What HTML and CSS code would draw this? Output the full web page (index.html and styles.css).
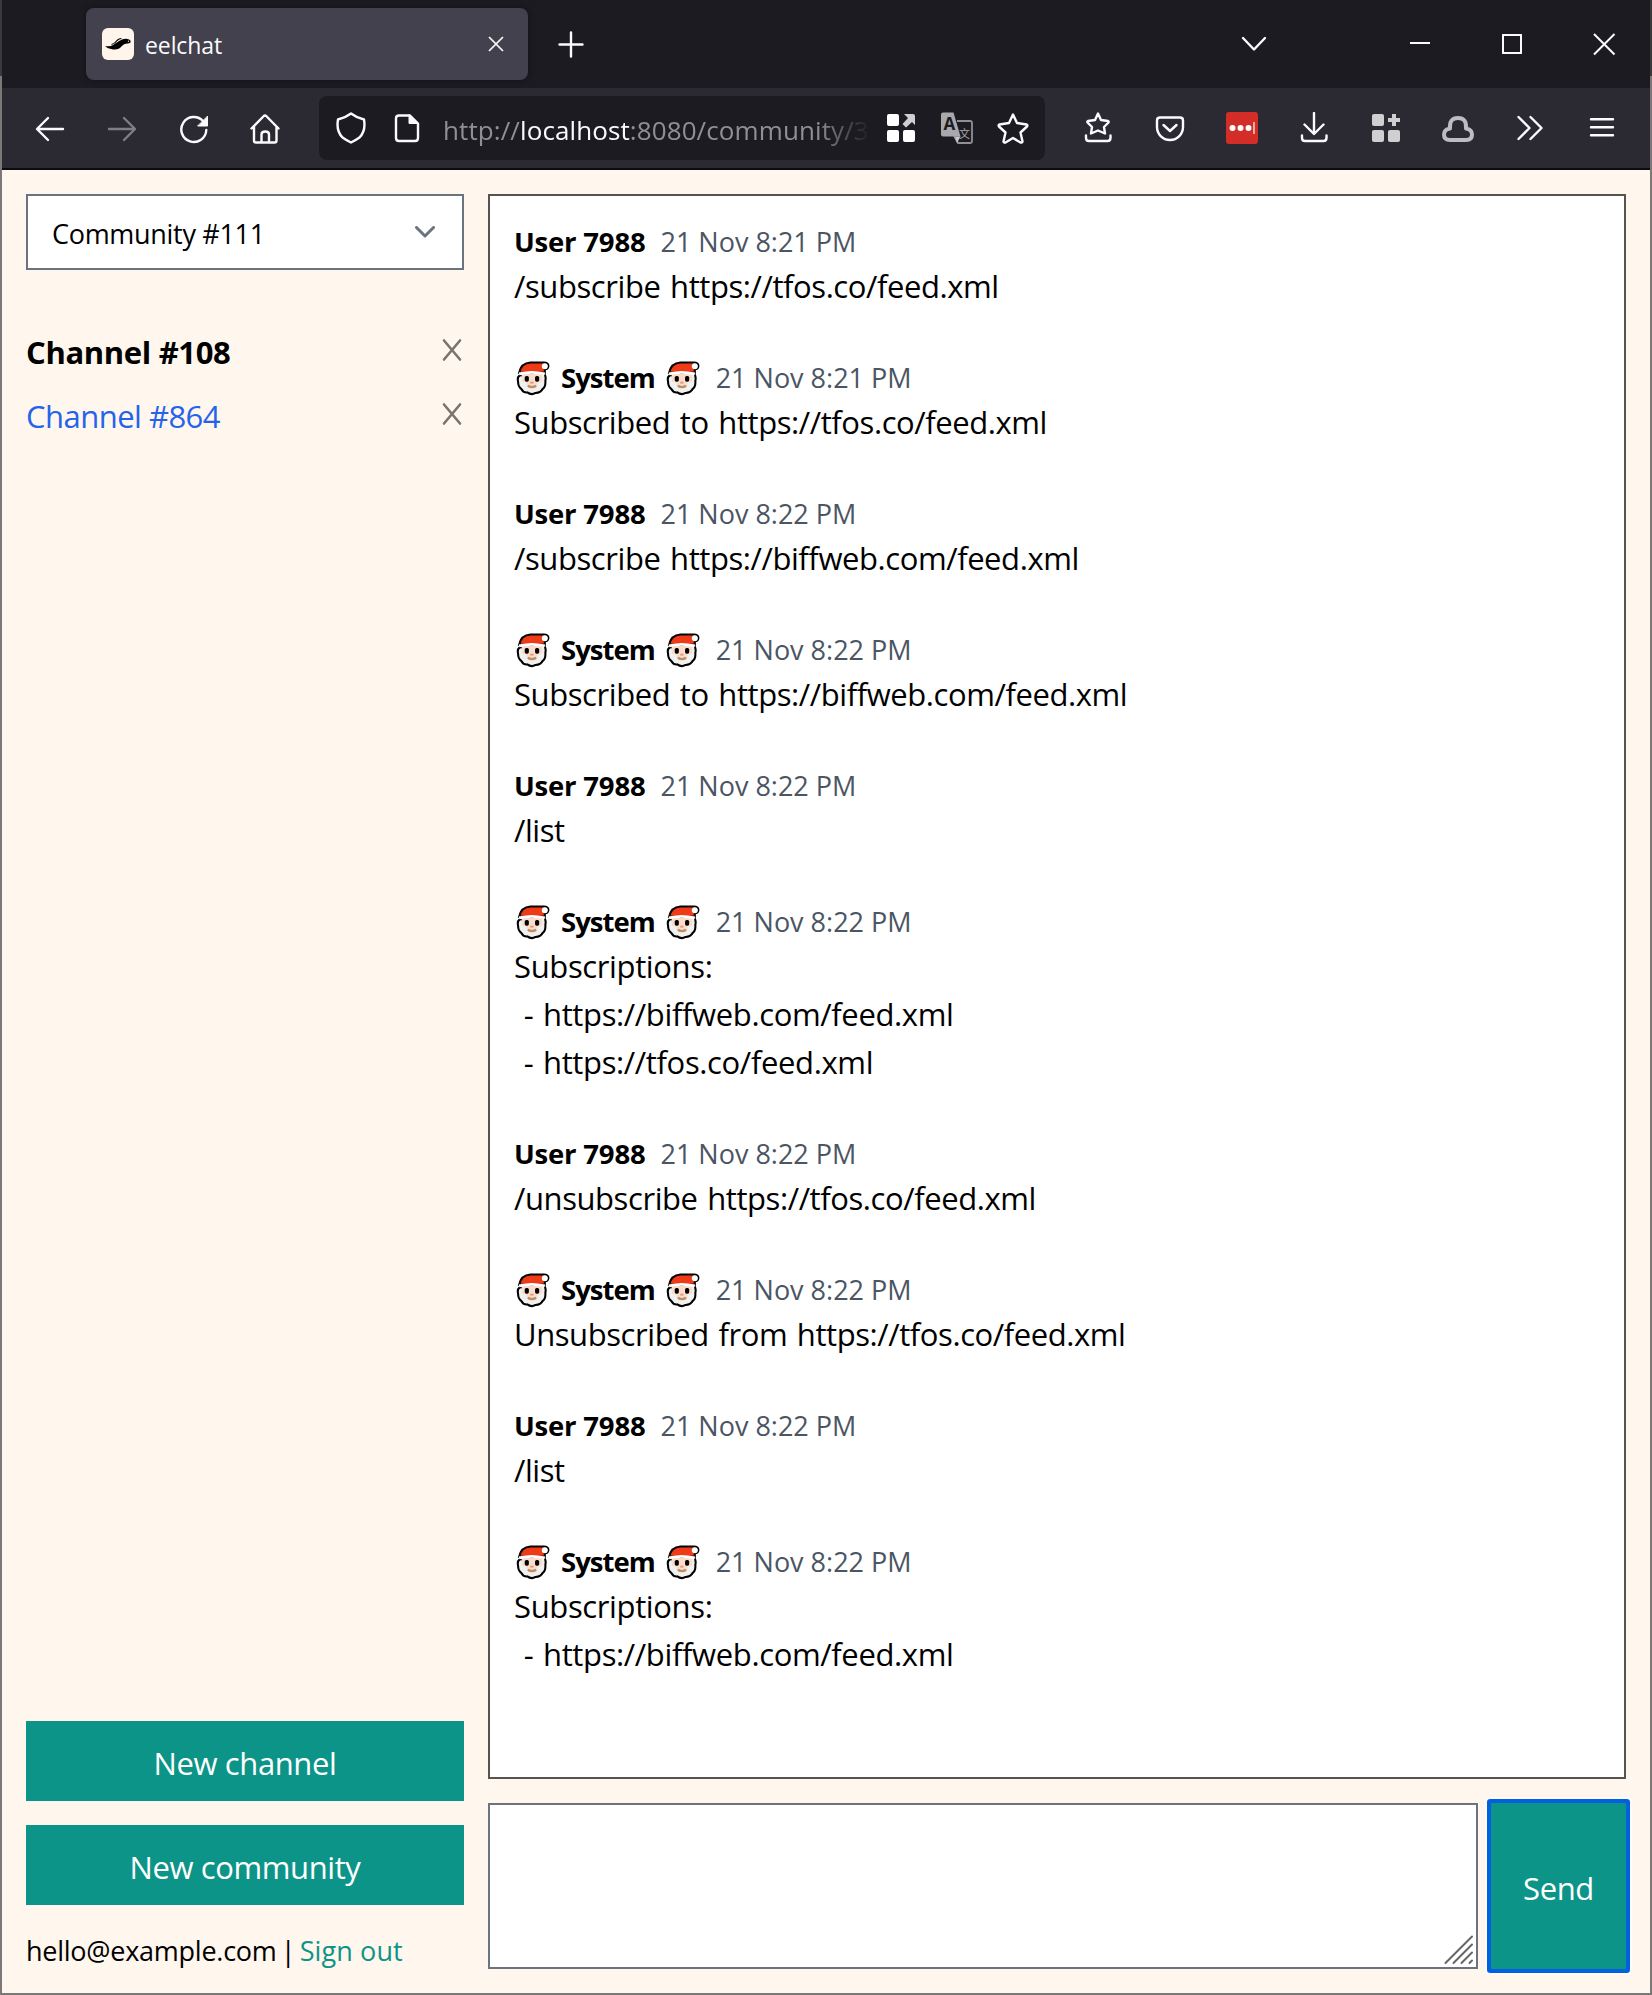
FILE: index.html
```html
<!DOCTYPE html>
<html lang="en">
<head>
<meta charset="utf-8">
<title>eelchat</title>
<link rel="stylesheet" href="styles.css">
</head>
<body>
<svg class="defs" width="0" height="0" aria-hidden="true">
  <symbol id="santa" viewBox="0 0 34 34">
    <path d="M3.500 14 Q1 16 2 20 Q2 25 5 27 Q7 31 11 30.500 Q15 33.500 19 31 Q24 31 26 27 Q29 25 28.500 19 Q29.500 16 27.500 12 Z" fill="#f1f1f1" stroke="#000" stroke-width="2"/>
    <path d="M5.500 12 H25.500 V18 Q25.500 21 22 20.500 Q15.500 18.500 9 20.500 Q5.500 21 5.500 18 Z" fill="#fbdccb"/>
    <rect x="10" y="18" width="11" height="8" rx="4" fill="#fbdccb"/>
    <path d="M3 11.500 Q5 2 14 1.500 H27 Q31.500 1.500 31.500 5 Q31 8.300 28 8 V11.500 Z" fill="#f03a17" stroke="#000" stroke-width="2"/>
    <path d="M3 12.500 Q15 9.500 28 12.500" fill="none" stroke="#fff" stroke-width="2.600"/>
    <circle cx="28" cy="5" r="2.900" fill="#fff"/>
    <rect x="8.500" y="14.500" width="4" height="5.600" rx="1.600"/><rect x="18.500" y="14.500" width="4" height="5.600" rx="1.600"/>
    <path d="M13.800 21 H17" stroke="#d59f73" stroke-width="1.800"/>
    <path d="M11.500 24 Q15.500 26.600 19.500 24" fill="none" stroke="#bf8f62" stroke-width="2.200"/>
  </symbol>
  <symbol id="cross" viewBox="0 0 20 24"><path d="M2 2.500 L18 21.500 M18 2.500 L2 21.500"/></symbol>
</svg>

<div class="window">
  <header class="browser">
    <div class="tabs">
      <div class="tab">
        <svg class="favicon" viewBox="0 0 32 32"><rect width="32" height="32" rx="6" fill="#fff5eb"/><path d="M3 18 Q8 19 11 17 Q15 14 18 12.500 Q23 9.500 28 12 Q30 15 26 15.500 Q22 15 20 18 Q16 23 9 21 Q5 20.500 3 18Z"/><path d="M9.500 16.500 Q13 15.500 15 12.500 Q17 10.500 19.500 10.500" fill="none" stroke="#000" stroke-width="1.200"/><circle cx="26.500" cy="13.200" r=".7" fill="#ddd"/></svg>
        <span class="tab-title">eelchat</span>
        <svg class="tab-close" viewBox="0 0 16 16"><path d="M1 1 L15 15 M15 1 L1 15"/></svg>
      </div>
      <svg class="ico new-tab" viewBox="0 0 32 32"><path d="M16 4.500 V28.500 M4.500 16.500 H27.500"/></svg>
      <svg class="ico list-tabs" viewBox="0 0 32 32"><path d="M5 10 L16 21.500 L27 10"/></svg>
      <div class="window-buttons">
        <span><svg class="ico thin" viewBox="0 0 32 32"><path d="M6 15 H26"/></svg></span>
        <span><svg class="ico thin" viewBox="0 0 32 32"><rect x="7" y="7" width="18" height="18"/></svg></span>
        <span><svg class="ico thin" viewBox="0 0 32 32"><path d="M6 6 L26.500 26.500 M26.500 6 L6 26.500"/></svg></span>
      </div>
    </div>
    <div class="toolbar">
      <div class="buttons">
        <span><svg class="ico" viewBox="0 0 32 32"><path d="M29 17 H3.500 M14 6 L3 17 L14 28"/></svg></span>
        <span class="disabled"><svg class="ico" viewBox="0 0 32 32"><path d="M3 17 H28.500 M18 6 L29 17 L18 28"/></svg></span>
        <span><svg class="ico" viewBox="0 0 32 32"><path d="M28.300 18 A12.500 12.500 0 1 1 25 9"/><path class="solid" d="M29.500 4.500 V14 H20 Z"/></svg></span>
        <span><svg class="ico" viewBox="1 0 32 32"><path d="M2.500 16.500 L14.800 4 Q16 3 17.200 4 L29.500 16.500 M5 14.500 V28.500 Q5 30.500 7 30.500 H25.500 Q27.500 30.500 27.500 28.500 V14.500 M12.500 30 V22.500 Q12.500 19.500 16.300 19.500 Q20 19.500 20 22.500 V30"/></svg></span>
      </div>
      <div class="urlbar">
        <span class="slot"><svg class="ico" viewBox="0 0 32 32"><path d="M16 1.500 Q22 6 29 7.500 Q31 19 24.500 25.500 Q21 28 16 30.500 Q11 28 7.500 25.500 Q1 19 3 7.500 Q10 6 16 1.500Z"/></svg></span>
        <span class="slot"><svg class="ico" viewBox="0 0 32 32"><path d="M19 3.500 H8 Q5 3.500 5 6.500 V26 Q5 29 8 29 H24 Q27 29 27 26 V11.500 Z"/><path class="solid" d="M18 3 V11.500 H27 Z"/></svg></span>
        <span class="url">http://<b>localhost</b>:8080/community/3</span>
        <span class="slot"><svg class="ico fills" viewBox="0 0 32 32"><rect x="2" y="2" width="12" height="12" rx="2"/><rect x="2" y="18" width="12" height="12" rx="2"/><rect x="18" y="18" width="12" height="12" rx="2"/><path d="M19 2 H28 Q30 2 30 4 V13 L27 10 L21 15.500 L17.500 12 L23 6 Z" fill="#cfcfd1"/></svg></span>
        <span class="slot"><svg class="translate" viewBox="0 0 32 32"><path d="M16 9 H29 Q31 9 31 11 V29 Q31 31 29 31 H17 L13 24" fill="none" stroke="#8f8f94" stroke-width="1.800"/><path d="M2 .5 H12.500 L19.500 24.500 H2 Q0 24.500 0 22.500 V2.500 Q0 .5 2 .5Z" fill="#a9a9ac"/><path d="M14 24.500 H19.500 L16 31Z" fill="#c8c8ca"/><text x="2.500" y="18" class="tr-a">A</text><text x="18" y="25.500" class="tr-b">文</text></svg></span>
        <span class="slot"><svg class="ico" viewBox="0 0 32 32"><path d="M16 2.500 L20 11 L29.500 12.500 Q31 13 30 14.500 L23.500 20.500 L25.500 29.500 Q25 31 23.500 30.500 L16 26 L8.500 30.500 Q7 31 6.500 29.500 L8.500 20.500 L2 14.500 Q1 13 2.500 12.500 L12 11 Z"/></svg></span>
      </div>
      <div class="buttons">
        <span><svg class="ico" viewBox="0 0 32 32"><path d="M16 1.500 L19 8 L26 9 Q27 9.500 26.500 10.500 L22 15 L23 21.500 L16 18.500 L9 21.500 L10 15 L5.500 10.500 Q5 9.500 6 9 L13 8 Z M4 23.500 V26 Q4 29 7 29 H25.500 Q28.500 29 28.500 26 V23.500"/></svg></span>
        <span><svg class="ico" viewBox="0 0 32 32"><path d="M6 5.500 H26 Q29 5.500 29 8.500 V15 C29 22 23.500 28 16 28 S3 22 3 15 V8.500 Q3 5.500 6 5.500Z M9.500 13 L16 19 L22.500 13"/></svg></span>
        <span><svg class="ico fills" viewBox="0 0 32 32"><rect width="32" height="32" rx="3" fill="#d32d27"/><circle cx="6.500" cy="16" r="3"/><circle cx="14.500" cy="16" r="3"/><circle cx="22.500" cy="16" r="3"/><rect x="27" y="10" width="2" height="12" fill="#eaa"/></svg></span>
        <span><svg class="ico" viewBox="0 0 32 32"><path d="M16 1 V21.500 M6.500 12.500 L16 22 L25.500 12.500 M4 23.500 V26 Q4 29 7 29 H25.500 Q28.500 29 28.500 26 V23.500"/></svg></span>
        <span><svg class="ico greys" viewBox="0 0 32 32"><rect x="2" y="2" width="12" height="12" rx="2"/><rect x="2" y="18" width="12" height="12" rx="2"/><rect x="18" y="18" width="12" height="12" rx="2"/><path d="M22 2 H26 V6 H30 V10 H26 V14 H22 V10 H18 V6 H22 Z"/></svg></span>
        <span><svg class="ico cloud" viewBox="0 0 32 32"><path d="M8 28 Q2 28 2 22.500 Q2 17.500 8 16.500 Q7 6 16 6 Q25 6 24 16.500 Q30 17.500 30 22.500 Q30 28 24 28 Z"/></svg></span>
        <span><svg class="ico" viewBox="0 0 32 32"><path d="M4.500 5 L15.500 16 L4.500 27 M16.500 5 L27.500 16 L16.500 27"/></svg></span>
        <span><svg class="ico" viewBox="0 0 32 32"><path d="M5 7.300 H27 M5 15.300 H27 M5 23.300 H27"/></svg></span>
      </div>
    </div>
  </header>

  <div class="app">
    <aside class="sidebar">
      <div class="select"><span>Community #111</span><svg viewBox="0 0 20 12"><path d="M1.500 1.500 L10 10 L18.500 1.500"/></svg></div>
      <nav class="channels">
        <div class="channel current"><span>Channel #108</span><svg><use href="#cross"/></svg></div>
        <div class="channel"><a>Channel #864</a><svg><use href="#cross"/></svg></div>
      </nav>
      <button class="btn">New channel</button>
      <button class="btn">New community</button>
      <div class="account"><span>hello@example.com</span> | <a>Sign out</a></div>
    </aside>
    <main class="chat">
      <section class="messages">
        <article><h3><b>User 7988</b><time>21 Nov 8:21 PM</time></h3><p>/subscribe https://tfos.co/feed.xml</p></article>
        <article class="system"><h3><svg><use href="#santa"/></svg><b>System</b><svg><use href="#santa"/></svg><time>21 Nov 8:21 PM</time></h3><p>Subscribed to https://tfos.co/feed.xml</p></article>
        <article><h3><b>User 7988</b><time>21 Nov 8:22 PM</time></h3><p>/subscribe https://biffweb.com/feed.xml</p></article>
        <article class="system"><h3><svg><use href="#santa"/></svg><b>System</b><svg><use href="#santa"/></svg><time>21 Nov 8:22 PM</time></h3><p>Subscribed to https://biffweb.com/feed.xml</p></article>
        <article><h3><b>User 7988</b><time>21 Nov 8:22 PM</time></h3><p>/list</p></article>
        <article class="system"><h3><svg><use href="#santa"/></svg><b>System</b><svg><use href="#santa"/></svg><time>21 Nov 8:22 PM</time></h3><p class="list">Subscriptions:
 - https://biffweb.com/feed.xml
 - https://tfos.co/feed.xml</p></article>
        <article><h3><b>User 7988</b><time>21 Nov 8:22 PM</time></h3><p>/unsubscribe https://tfos.co/feed.xml</p></article>
        <article class="system"><h3><svg><use href="#santa"/></svg><b>System</b><svg><use href="#santa"/></svg><time>21 Nov 8:22 PM</time></h3><p>Unsubscribed from https://tfos.co/feed.xml</p></article>
        <article><h3><b>User 7988</b><time>21 Nov 8:22 PM</time></h3><p>/list</p></article>
        <article class="system"><h3><svg><use href="#santa"/></svg><b>System</b><svg><use href="#santa"/></svg><time>21 Nov 8:22 PM</time></h3><p class="list">Subscriptions:
 - https://biffweb.com/feed.xml</p></article>
      </section>
      <form class="composer">
        <div class="field"><svg viewBox="0 0 30 30"><path d="M1.500 28 L28 1.500 M9.500 28 L28 9.500 M17.500 28 L28 17.500 M25.500 28 L28 25.500"/></svg></div>
        <button class="send" type="button">Send</button>
      </form>
    </main>
  </div>
</div>
</body>
</html>
```
FILE: styles.css
```css
* { box-sizing: border-box; }
body { margin: 0; font-family: "Open Sans", "Noto Sans", sans-serif; color: #000; }
h3, p { margin: 0; font-weight: 400; }
svg { display: block; flex: none; }
.defs { position: absolute; }

.window {
  height: 1995px; padding: 0 2px 2px;
  display: flex; flex-direction: column;
  background: linear-gradient(#3a3a3c 0, #3a3a3c 76px, #7b7877 76px);
}

/* Browser chrome */
.browser { height: 170px; border-bottom: 2px solid #0c0c0d; background: #2b2a33; }
.tabs { height: 88px; background: #1c1b22; display: flex; align-items: center; padding-left: 84px; }
.tab {
  width: 442px; height: 72px; padding: 0 24px 0 16px; border-radius: 8px;
  background: #42414d; box-shadow: 0 0 6px rgba(0, 0, 0, .4);
  display: flex; align-items: center;
}
.favicon { width: 32px; height: 32px; }
.tab-title { flex: 1; padding: 2px 0 0 11px; font-size: 23px; color: #fbfbfe; letter-spacing: -.1px; }
.tab-close { width: 16px; height: 16px; fill: none; stroke: #fbfbfe; stroke-width: 1.7; }
.ico { width: 32px; height: 32px; fill: none; stroke: #fbfbfe; stroke-width: 2.4; stroke-linecap: round; stroke-linejoin: round; }
.ico .solid { fill: #fbfbfe; stroke-width: 1; }
.ico.thin { stroke-width: 2; stroke-linecap: butt; stroke-linejoin: miter; }
.ico.fills { fill: #fff; stroke: none; }
.ico.greys { fill: #cfcfd1; stroke: none; }
.ico.cloud { stroke: #bdbdc1; stroke-width: 4; }
.new-tab { margin-left: 27px; }
.list-tabs { margin-left: auto; margin-right: 104px; }
.window-buttons { display: flex; }
.window-buttons span { width: 92px; display: flex; justify-content: center; }
.toolbar { height: 80px; display: flex; align-items: center; padding-left: 12px; }
.buttons { display: flex; }
.buttons span { width: 72px; display: flex; justify-content: center; }
.buttons .disabled { opacity: .4; }
.urlbar {
  width: 726px; height: 64px; margin: 0 17px; padding: 0 4px; border-radius: 8px;
  background: #1c1b22; display: flex; align-items: center;
}
.slot { flex: none; width: 56px; display: flex; justify-content: center; }
.url {
  flex: 1; min-width: 0; overflow: hidden; white-space: nowrap; margin: 0 2px 0 8px; padding-top: 3px;
  font-size: 26px; line-height: 40px; color: #8f8f94; letter-spacing: .1px;
  -webkit-mask-image: linear-gradient(90deg, #000 calc(100% - 54px), transparent);
  mask-image: linear-gradient(90deg, #000 calc(100% - 54px), transparent);
}
.url b { font-weight: 400; color: #fbfbfe; }
.translate { width: 32px; height: 32px; }
.tr-a { font: 700 17px "Open Sans", sans-serif; fill: #1c1b22; }
.tr-b { font: 11px "Noto Sans CJK SC", sans-serif; fill: #a9a9ac; }

/* Page */
.app { flex: 1; padding: 24px; background: #fff6ed; display: flex; gap: 24px; }
.sidebar { width: 438px; display: flex; flex-direction: column; }
.select {
  height: 76px; padding: 2px 27px 0 24px; border: 2px solid #6b7280; background: #fff;
  display: flex; align-items: center; justify-content: space-between;
  font-size: 27px; letter-spacing: -.3px;
}
.select svg { width: 20px; height: 12px; margin-bottom: 3px; fill: none; stroke: #6b7280; stroke-width: 3; stroke-linecap: round; stroke-linejoin: round; }
.channels { flex: 1; padding-top: 48px; }
.channel { height: 64px; display: flex; align-items: center; justify-content: space-between; font-size: 31px; letter-spacing: -.52px; color: #2563eb; }
.channel span, .channel a { padding-top: 3px; }
.channel.current { font-weight: 700; color: #000; letter-spacing: -.35px; }
.channel svg { width: 20px; height: 24px; margin-right: 2px; fill: none; stroke: #78746f; stroke-width: 2.6; stroke-linecap: round; }
.btn, .send { border: 0; background: #0d9488; color: #fff; font: 31px "Open Sans", sans-serif; letter-spacing: -.4px; }
.btn { height: 80px; margin-bottom: 24px; padding: 4px 0 0; }
.account { height: 40px; padding-top: 2px; font-size: 27px; line-height: 40px; letter-spacing: -.25px; word-spacing: -2.500px; white-space: pre; }
.account a { letter-spacing: .1px; word-spacing: 0; color: #0d9488; }

.chat { flex: 1; display: flex; flex-direction: column; gap: 24px; }
.messages { flex: 1; padding: 24px; border: 2px solid #57534e; background: #fff; }
.messages article { margin-bottom: 48px; }
.messages article:first-child { padding-top: 2px; }
.messages h3 { height: 40px; display: flex; align-items: center; font-size: 27.5px; line-height: 40px; }
.messages h3 svg { width: 35px; height: 35px; margin: 0 0 0 2px; }
.messages h3 b { font-weight: 700; letter-spacing: -.2px; }
.messages time { margin-left: 15px; font-size: 27px; color: #4b5563; }
.messages .system b { margin: 0 9px 0 10px; letter-spacing: -1px; }
.messages p { font-size: 31px; line-height: 48px; letter-spacing: -.42px; word-spacing: 2px; white-space: pre; }
.messages p.list { letter-spacing: -.36px; }
.composer { height: 166px; display: flex; gap: 13px; }
.field { flex: 1; border: 2px solid #6b7280; background: #fff; display: flex; align-items: flex-end; justify-content: flex-end; padding: 2px; }
.field svg { width: 30px; height: 30px; fill: none; stroke: #666; stroke-width: 2; stroke-linecap: round; }
.send { width: 135px; padding: 4px 0 0; border-radius: 1px; box-shadow: 0 0 0 4px #0060df, 0 0 0 6px #fffaf7; }
```
